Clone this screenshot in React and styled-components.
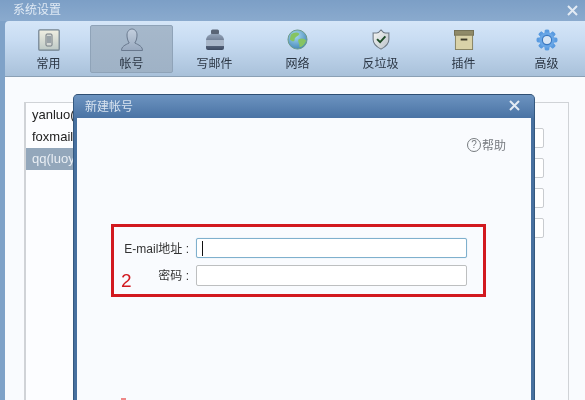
import React from 'react';
import styled, { createGlobalStyle } from 'styled-components';

const cjk = '"Liberation Sans", "Noto Sans CJK SC", sans-serif';

const GlobalStyle = createGlobalStyle`
  html, body {
    margin: 0;
    padding: 0;
    width: 585px;
    height: 400px;
    overflow: hidden;
    background: #f9fbfe;
    font-family: ${cjk};
  }
`;

const Frame = styled.div`
  position: relative;
  width: 585px;
  height: 400px;
  box-sizing: border-box;
  overflow: hidden;
  display: flex;
  flex-direction: column;
  background: #7fa2c8;
  padding: 0 0 0 5px;
  filter: blur(0.35px);
`;

const TitleBar = styled.div`
  height: 21px;
  flex: none;
  margin-left: -5px;
  box-sizing: border-box;
  display: flex;
  align-items: center;
  justify-content: space-between;
  padding: 0 7px 5px 13px;
  background: linear-gradient(#7c9fc6, #8aaace);
  color: #dfe9f4;
  font-size: 12px;
`;

const CloseIcon = ({ size = 11, offset = 0 }) => (
  <svg width={size} height={size} viewBox="0 0 11 11" style={{ marginTop: offset }}>
    <path d="M1 1 L10 10 M10 1 L1 10" stroke="#e3ebf4" strokeWidth="2" />
  </svg>
);

const Toolbar = styled.div`
  height: 56px;
  flex: none;
  display: flex;
  align-items: center;
  padding: 0 0 0 2px;
  box-sizing: border-box;
  border-top-left-radius: 4px;
  border-bottom: 1px solid #8ba0b5;
  background: linear-gradient(#d5e6f8 0%, #c8dcf2 35%, #a9c1da 100%);
`;

const ToolItem = styled.div`
  width: 83px;
  height: 48px;
  flex: none;
  box-sizing: border-box;
  display: flex;
  flex-direction: column;
  align-items: center;
  justify-content: flex-end;
  padding-bottom: 1px;
  gap: 2px;
  font-size: 12px;
  color: #2b3644;
  border-radius: 2px;
  border: 1px solid ${p => (p.$active ? '#8fa3b8' : 'transparent')};
  background: ${p => (p.$active ? 'linear-gradient(#a6b8cb, #9fb2c6)' : 'transparent')};
`;

const IconSlot = styled.div`
  width: 24px;
  height: 24px;
  display: flex;
  align-items: center;
  justify-content: center;
`;

const Content = styled.div`
  flex: 1;
  display: flex;
  padding: 25px 16px 0 19px;
  background: #f9fbfe;
`;

const AccountList = styled.div`
  width: 120px;
  height: 320px;
  flex: none;
  box-sizing: border-box;
  padding-top: 1px;
  border: 1px solid #d0d3d7;
  border-left-width: 2px;
  background: #fcfdff;
`;

const AccountRow = styled.div`
  height: 22px;
  line-height: 22px;
  padding-left: 6px;
  font-size: 13px;
  white-space: nowrap;
  overflow: hidden;
  color: ${p => (p.$selected ? '#e9eef4' : '#222')};
  background: ${p => (p.$selected ? '#93a7bb' : 'transparent')};
`;

const SettingsPanel = styled.div`
  flex: 1;
  height: 320px;
  box-sizing: border-box;
  border: 1px solid #d0d3d7;
  border-left: none;
  display: flex;
  flex-direction: column;
  align-items: flex-end;
  gap: 10px;
  padding: 25px 24px 0 0;
`;

const SettingsField = styled.div`
  width: 60px;
  height: 20px;
  box-sizing: border-box;
  border: 1px solid #c9ccd0;
  border-radius: 2px;
  background: #fff;
`;

const Dialog = styled.div`
  position: absolute;
  left: 73px;
  top: 94px;
  width: 462px;
  height: 330px;
  box-sizing: border-box;
  display: flex;
  flex-direction: column;
  border-radius: 5px 5px 0 0;
  border: 1px solid #34587f;
  border-top-color: #2f4e72;
  border-bottom: none;
  background: #47709f;
`;

const DialogHead = styled.div`
  height: 23px;
  flex: none;
  box-sizing: border-box;
  display: flex;
  align-items: center;
  justify-content: space-between;
  padding: 0 14px 2px 11px;
  border-radius: 4px 4px 0 0;
  background: linear-gradient(#6c93c0, #4a73a4);
  color: #d9e4f0;
  font-size: 12px;
`;

const DialogBody = styled.div`
  flex: 1;
  margin: 0 3px;
  display: flex;
  flex-direction: column;
  background: #f9fbfe;
`;

const HelpLink = styled.div`
  align-self: flex-end;
  display: flex;
  align-items: center;
  gap: 1px;
  margin: 18px 25px 0 0;
  font-size: 12px;
  color: #777b80;
`;

const HelpMark = styled.span`
  width: 14px;
  height: 14px;
  box-sizing: border-box;
  border: 1px solid #777b80;
  border-radius: 50%;
  display: flex;
  align-items: center;
  justify-content: center;
  font-size: 10px;
  line-height: 1;
`;

const Highlight = styled.div`
  position: relative;
  margin: 71px 0 0 34px;
  width: 375px;
  height: 73px;
  box-sizing: border-box;
  border: 3px solid #d2191f;
  display: flex;
  flex-direction: column;
  gap: 7px;
  padding: 11px 0 0 0;
`;

const FormRow = styled.div`
  display: flex;
  align-items: center;
`;

const FormLabel = styled.label`
  width: 82px;
  flex: none;
  box-sizing: border-box;
  text-align: right;
  font-size: 12px;
  color: #333;
  white-space: nowrap;
  padding: 0 7px 2px 0;
`;

const TextInput = styled.div`
  width: 271px;
  height: ${p => p.$h}px;
  box-sizing: border-box;
  display: flex;
  align-items: center;
  padding-left: 5px;
  background: #fff;
  border: 1px solid ${p => (p.$focus ? '#7fb0cd' : '#bdbfc0')};
  border-radius: 2px;
  box-shadow: ${p => (p.$focus ? '0 0 1px #a8cde2' : 'none')};
`;

const Caret = styled.span`
  width: 1px;
  height: 15px;
  background: #111;
`;

const StepNumber = styled.span`
  position: absolute;
  left: 7px;
  top: 44px;
  font-size: 19px;
  line-height: 20px;
  color: #d2191f;
  font-family: "Liberation Sans", sans-serif;
`;

const StrayMark = styled.span`
  position: absolute;
  left: 47px;
  top: 303px;
  width: 5px;
  height: 2px;
  background: #e88;
`;

const CommonIcon = () => (
  <svg width="22" height="22" viewBox="0 0 22 22">
    <defs>
      <linearGradient id="cm" x1="0" y1="0" x2="0" y2="1">
        <stop offset="0" stopColor="#f1efe2" />
        <stop offset="1" stopColor="#bdc9c6" />
      </linearGradient>
    </defs>
    <rect x="0.8" y="0.8" width="20.4" height="20.4" rx="1" fill="url(#cm)" stroke="#71818f" strokeWidth="1.2" />
    <rect x="8" y="5" width="6" height="12" rx="1" fill="#d5d8d4" stroke="#5a646e" strokeWidth="0.8" />
    <rect x="9" y="7" width="4" height="7" fill="#9aa3a8" />
  </svg>
);

const UserIcon = () => (
  <svg width="24" height="24" viewBox="0 0 24 24">
    <defs>
      <linearGradient id="us" x1="0" y1="0" x2="0" y2="1">
        <stop offset="0" stopColor="#c3cfde" />
        <stop offset="1" stopColor="#98a9bf" />
      </linearGradient>
    </defs>
    <path d="M1.5 22.5 C1.5 18.5 5 17 9.2 15 C7.5 12.5 7 9.5 7 7 C7 3.2 9.5 1 12 1 C14.5 1 17 3.2 17 7 C17 9.5 16.5 12.5 14.8 15 C19 17 22.5 18.5 22.5 22.5 Z" fill="url(#us)" stroke="#69798e" strokeWidth="1" />
  </svg>
);

const InkIcon = () => (
  <svg width="20" height="22" viewBox="0 0 20 22">
    <defs>
      <linearGradient id="ik" x1="0" y1="0" x2="0" y2="1">
        <stop offset="0" stopColor="#93a3b8" />
        <stop offset="1" stopColor="#3d4b62" />
      </linearGradient>
    </defs>
    <rect x="6" y="0.5" width="8" height="5" rx="1.5" fill="#5a6576" />
    <path d="M6 5 H14 Q19 7 19 11 V19 Q19 21 17 21 H3 Q1 21 1 19 V11 Q1 7 6 5 Z" fill="url(#ik)" />
    <rect x="1" y="11" width="18" height="6" fill="#a9b7c9" />
  </svg>
);

const GlobeIcon = () => (
  <svg width="21" height="21" viewBox="0 0 22 22">
    <defs>
      <radialGradient id="gl" cx="0.4" cy="0.3" r="0.8">
        <stop offset="0" stopColor="#a8daf2" />
        <stop offset="1" stopColor="#3a7fb2" />
      </radialGradient>
    </defs>
    <circle cx="11" cy="11" r="10" fill="url(#gl)" stroke="#6c9a86" strokeWidth="1" />
    <path d="M4 6 C7 3 11 3 13 5 C12 8 8 8 8 11 C8 14 5 13 3 11 Z" fill="#86c462" />
    <path d="M12 11 C15 9 19 10 20 12 C19 16 16 19 13 19 C14 16 11 14 12 11 Z" fill="#86c462" />
  </svg>
);

const ShieldIcon = () => (
  <svg width="18" height="21" viewBox="0 0 20 24">
    <defs>
      <linearGradient id="sh" x1="0" y1="0" x2="1" y2="1">
        <stop offset="0" stopColor="#f7f8f5" />
        <stop offset="1" stopColor="#b9c1c8" />
      </linearGradient>
    </defs>
    <path d="M10 1 L13 4 Q16 5 19 4.5 V12 C19 17 14 21 10 23 C6 21 1 17 1 12 V4.5 Q4 5 7 4 Z" fill="url(#sh)" stroke="#6d7883" strokeWidth="1.2" />
    <path d="M5.5 11.5 L9 15 L15 8.5" fill="none" stroke="#1c4a26" strokeWidth="2.2" />
  </svg>
);

const BoxIcon = () => (
  <svg width="20" height="20" viewBox="0 0 21 21">
    <rect x="0.5" y="0.5" width="20" height="5" fill="#8f8a68" stroke="#726e52" />
    <rect x="1.5" y="5.5" width="18" height="15" fill="#d9d2a8" stroke="#85805f" />
    <rect x="7" y="9" width="7" height="2" fill="#3d3a2a" />
  </svg>
);

const GearIcon = () => {
  const teeth = [0, 45, 90, 135, 180, 225, 270, 315];
  return (
    <svg width="22" height="22" viewBox="0 0 24 24">
      {teeth.map(a => (
        <rect key={a} x="9.6" y="0.8" width="4.8" height="22.4" rx="1.2" fill="#5a9be0" transform={`rotate(${a} 12 12)`} />
      ))}
      <circle cx="12" cy="12" r="8.4" fill="#68a6e6" />
      <circle cx="12" cy="12" r="5" fill="#d6e5f5" stroke="#3a78c0" strokeWidth="1.2" />
    </svg>
  );
};

const tools = [
  { label: '常用', icon: <CommonIcon /> },
  { label: '帐号', icon: <UserIcon />, active: true },
  { label: '写邮件', icon: <InkIcon /> },
  { label: '网络', icon: <GlobeIcon /> },
  { label: '反垃圾', icon: <ShieldIcon /> },
  { label: '插件', icon: <BoxIcon /> },
  { label: '高级', icon: <GearIcon /> },
];

const accounts = [
  { name: 'yanluo(华' },
  { name: 'foxmail(' },
  { name: 'qq(luoyan', selected: true },
];

export default function App() {
  return (
    <>
      <GlobalStyle />
      <Frame>
        <TitleBar>
          <span>系统设置</span>
          <CloseIcon offset={4} />
        </TitleBar>
        <Toolbar>
          {tools.map(t => (
            <ToolItem key={t.label} $active={t.active}>
              <IconSlot>{t.icon}</IconSlot>
              <span>{t.label}</span>
            </ToolItem>
          ))}
        </Toolbar>
        <Content>
          <AccountList>
            {accounts.map(a => (
              <AccountRow key={a.name} $selected={a.selected}>{a.name}</AccountRow>
            ))}
          </AccountList>
          <SettingsPanel>
            <SettingsField />
            <SettingsField />
            <SettingsField />
            <SettingsField />
          </SettingsPanel>
        </Content>
        <Dialog>
          <DialogHead>
            <span>新建帐号</span>
            <CloseIcon />
          </DialogHead>
          <DialogBody>
            <HelpLink>
              <HelpMark>?</HelpMark>
              <span>帮助</span>
            </HelpLink>
            <Highlight>
              <FormRow>
                <FormLabel>E-mail地址 :</FormLabel>
                <TextInput $focus $h={20}><Caret /></TextInput>
              </FormRow>
              <FormRow>
                <FormLabel>密码 :</FormLabel>
                <TextInput $h={21} />
              </FormRow>
              <StepNumber>2</StepNumber>
            </Highlight>
            <StrayMark />
          </DialogBody>
        </Dialog>
      </Frame>
    </>
  );
}
